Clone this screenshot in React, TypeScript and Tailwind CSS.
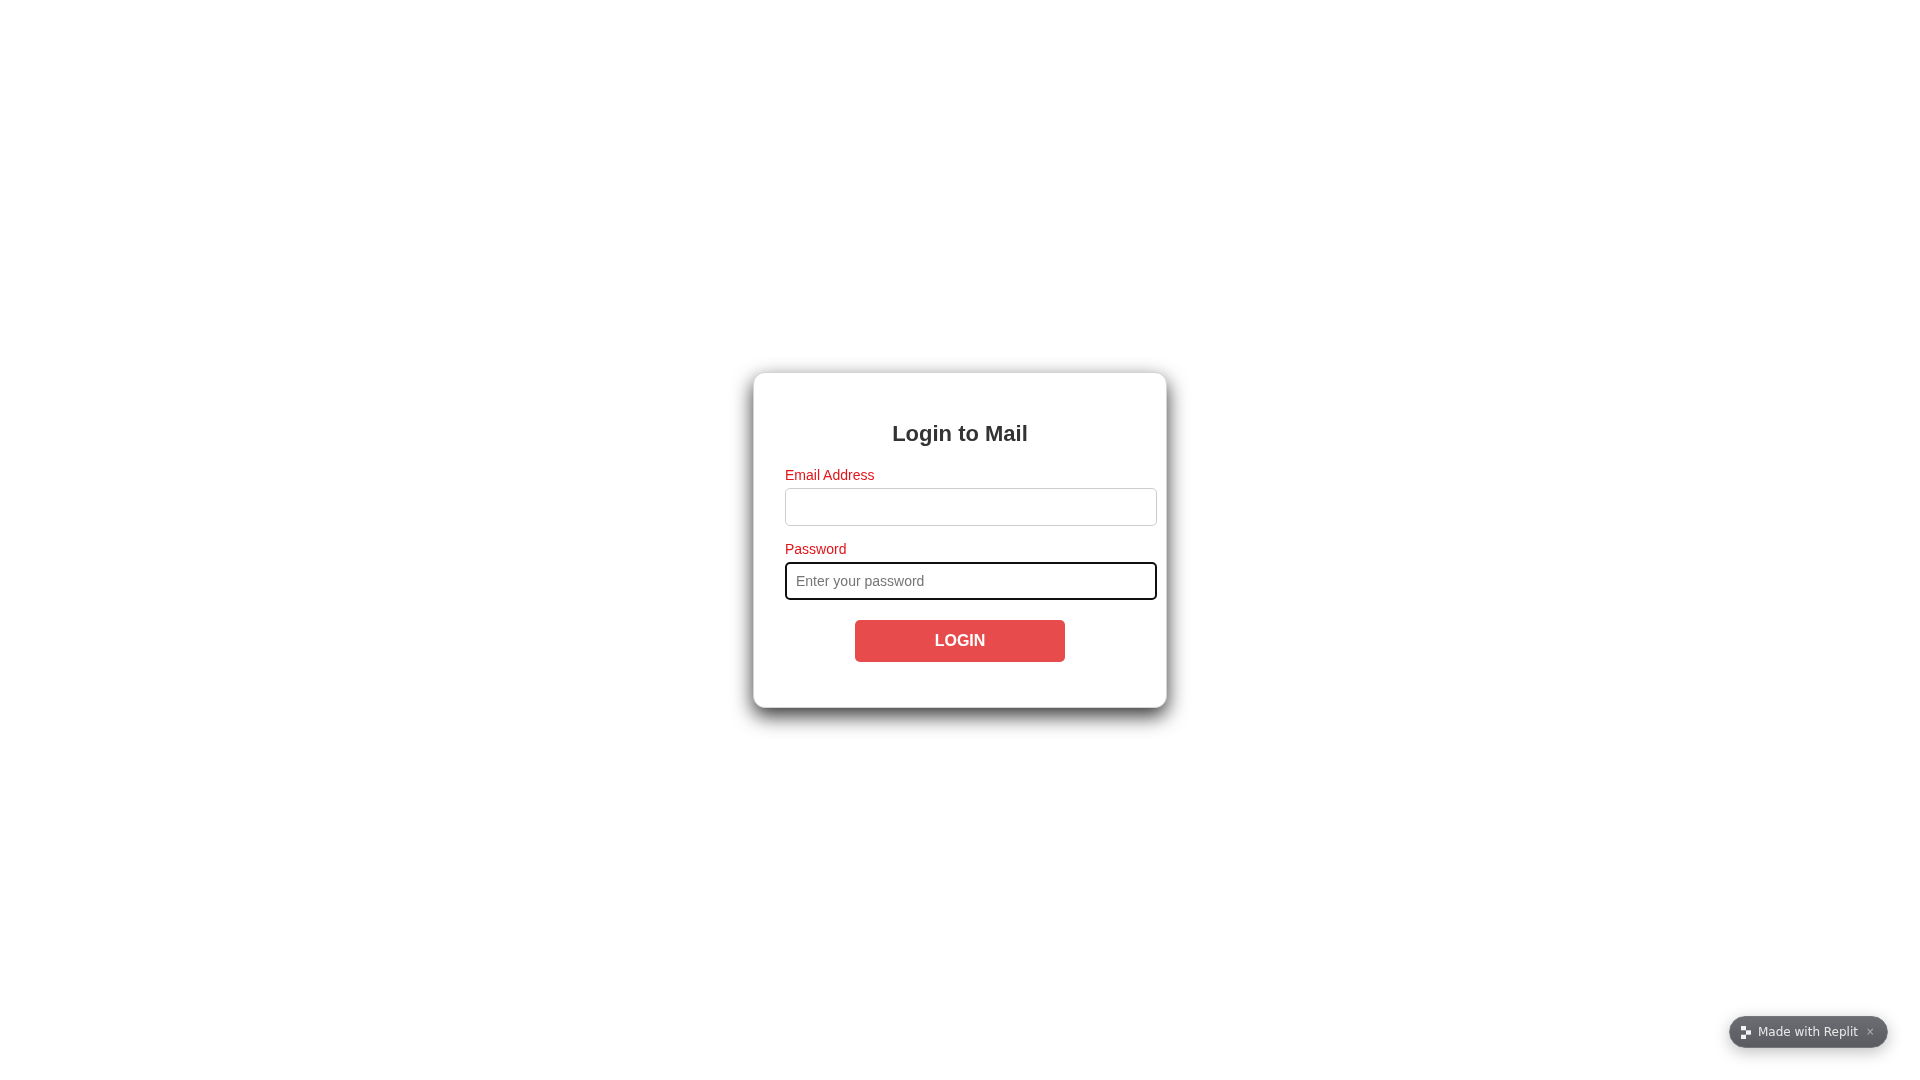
export default function App() {
    return (
        <div className="flex min-h-screen items-center justify-center bg-white font-['Liberation_Sans',Arial,sans-serif]">
            <div className="w-[414px] rounded-[12px] border border-[#d4d4d4] bg-white px-[31px] pt-[47px] pb-[45px] shadow-[0_8px_20px_rgba(0,0,0,0.8)] will-change-transform">
                <h2 className="mb-[19px] text-center text-[22px] leading-[28px] font-bold text-[#333333]">Login to Mail</h2>
                <form className="flex flex-col">
                    <label className="mb-[5px] text-sm leading-4 text-[#e2141a]">Email Address</label>
                    <input type="email" className="mb-[15px] h-[38px] w-[372px] max-w-none rounded-[5px] border border-[#cccccc] bg-white px-[10px] text-sm outline-none" />
                    <label className="mb-[5px] text-sm leading-4 text-[#e2141a]">Password</label>
                    <input type="password" placeholder="Enter your password" className="mb-5 h-[38px] w-[372px] max-w-none rounded-[5px] border-2 border-[#101010] bg-white px-[9px] text-sm outline-none placeholder:text-[#757575]" />
                    <button type="button" className="mx-auto h-[42px] w-[210px] rounded-[5px] bg-[#e84b4b] text-base font-bold text-white">LOGIN</button>
                </form>
            </div>
            <div className="fixed right-[32px] bottom-[32px] flex h-[32px] w-[159px] items-center rounded-full border border-[#76777b] bg-gradient-to-b from-[#6c6d72] to-[#5a5b60] pl-[11px] font-['DejaVu_Sans',sans-serif] text-xs text-[#e8e8ea] shadow-[0_4px_16px_rgba(0,0,0,0.25)] will-change-transform">
                <svg className="h-[13px] w-[10px]" viewBox="0 0 10 13" fill="#f2f2f4">
                    <rect x="0" y="0" width="5" height="4.3" />
                    <rect x="5" y="4.3" width="5" height="4.4" />
                    <rect x="0" y="8.7" width="5" height="4.3" />
                </svg>
                <span className="ml-[7px]">Made with Replit</span>
                <span className="ml-[8px] text-[10px] text-[#b5b5b8]">×</span>
            </div>
        </div>
    );
}
